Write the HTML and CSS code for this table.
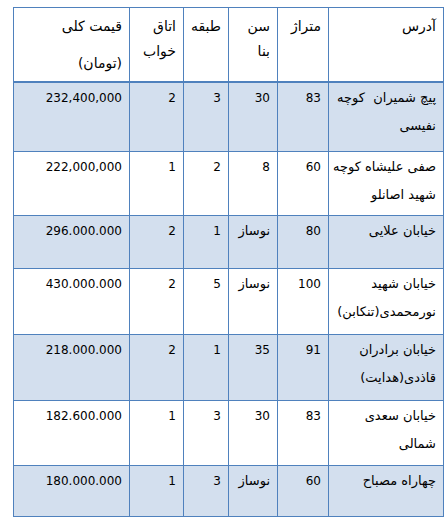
FILE: index.html
```html
<!DOCTYPE html>
<html lang="fa">
<head>
<meta charset="utf-8">
<link rel="stylesheet" href="styles.css">
</head>
<body>
<table class="grid" dir="rtl">
  <colgroup>
    <col class="c-addr"><col class="c-area"><col class="c-age"><col class="c-floor"><col class="c-bed"><col class="c-price">
  </colgroup>
  <thead>
    <tr>
      <th>آدرس</th>
      <th>متراژ</th>
      <th>سن<br>بنا</th>
      <th>طبقه</th>
      <th>اتاق<br>خواب</th>
      <th><span class="line">قیمت کلی</span><span class="line sub">(تومان)</span></th>
    </tr>
  </thead>
  <tbody>
    <tr class="band r1">
      <td class="fa">پیچ شمیران&nbsp; کوچه<br>نفیسی</td><td class="num">83</td><td class="num">30</td><td class="num">3</td><td class="num">2</td><td class="num">232,400,000</td>
    </tr>
    <tr class="r2">
      <td class="fa">صفی علیشاه کوچه<br>شهید اصانلو</td><td class="num">60</td><td class="num">8</td><td class="num">2</td><td class="num">1</td><td class="num">222,000,000</td>
    </tr>
    <tr class="band r3">
      <td class="fa">خیابان علایی</td><td class="num">80</td><td class="fa">نوساز</td><td class="num">1</td><td class="num">2</td><td class="num">296.000.000</td>
    </tr>
    <tr class="r4">
      <td class="fa">خیابان شهید<br>نورمحمدی(تنکابن)</td><td class="num">100</td><td class="fa">نوساز</td><td class="num">5</td><td class="num">2</td><td class="num">430.000.000</td>
    </tr>
    <tr class="band r5">
      <td class="fa">خیابان برادران<br>قاذدی(هدایت)</td><td class="num">91</td><td class="num">35</td><td class="num">1</td><td class="num">2</td><td class="num">218.000.000</td>
    </tr>
    <tr class="r6">
      <td class="fa">خیابان سعدی<br>شمالی</td><td class="num">83</td><td class="num">30</td><td class="num">3</td><td class="num">1</td><td class="num">182.600.000</td>
    </tr>
    <tr class="band r7">
      <td class="fa">چهاراه مصباح</td><td class="num">60</td><td class="fa">نوساز</td><td class="num">3</td><td class="num">1</td><td class="num">180.000.000</td>
    </tr>
  </tbody>
</table>
</body>
</html>
```
FILE: styles.css
```css
html, body {
  margin: 0;
  padding: 0;
  background: #ffffff;
}
body {
  padding: 7px 0 0 13px;
  font-family: "DejaVu Sans", sans-serif;
  color: #000;
}
.grid {
  border-collapse: collapse;
  table-layout: fixed;
  width: 430px;
}
.c-addr { width: 115px; }
.c-area { width: 51px; }
.c-age { width: 49px; }
.c-floor { width: 45px; }
.c-bed { width: 54px; }
.c-price { width: 116px; }

.grid th, .grid td {
  border: 1px solid #4f81bd;
  text-align: right;
  vertical-align: top;
  padding: 0 7px 0 1px;
  white-space: nowrap;
  overflow: hidden;
}
.grid th {
  font-weight: normal;
  font-size: 14px;
  line-height: 25px;
  padding-top: 6px;
  height: 67px;
  border-bottom: 2px solid #4f81bd;
}
.line { display: block; }
.sub { margin-top: 12px; }

.grid td {
  font-size: 13px;
  line-height: 28px;
  padding-top: 1px;
}
.grid td.num {
  font-size: 12px;
}
.band td { background: #d3dfee; }

.r1 td { height: 67px; }
.r2 td { height: 62px; }
.r3 td { height: 51px; }
.r4 td { height: 64px; }
.r5 td { height: 64px; }
.r6 td { height: 63px; }
.r7 td { height: 49px; }
```
